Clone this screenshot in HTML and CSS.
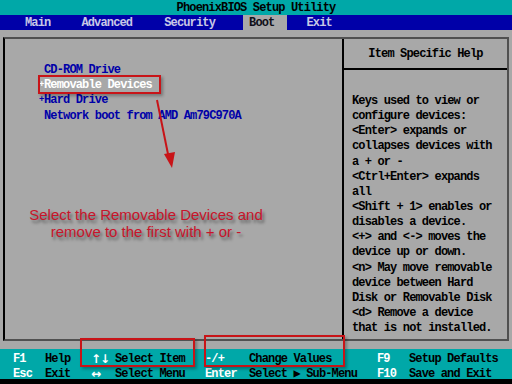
FILE: index.html
```html
<!DOCTYPE html>
<html>
<head>
<meta charset="utf-8">
<link rel="stylesheet" href="styles.css">
</head>
<body>
<div class="screen">
  <div class="title">PhoenixBIOS Setup Utility</div>
  <div class="menu">
    <span class="m m-main">Main</span>
    <span class="m m-adv">Advanced</span>
    <span class="m m-sec">Security</span>
    <span class="m m-boot">Boot</span>
    <span class="m m-exit">Exit</span>
  </div>
  <div class="main">
    <div class="frame">
      <div class="left">
        <div class="item">CD-ROM Drive</div>
        <div class="item sel"><span class="mark">+</span>Removable Devices</div>
        <div class="item"><span class="mark">+</span>Hard Drive</div>
        <div class="item">Network boot from AMD Am79C970A</div>
        <div class="note">
          <div>Select the Removable Devices and</div>
          <div>remove to the first with + or -</div>
        </div>
      </div>
      <div class="right">
        <div class="help-head">Item Specific Help</div>
        <div class="help">
          <div>Keys used to view or</div>
          <div>configure devices:</div>
          <div>&lt;Enter&gt; expands or</div>
          <div>collapses devices with</div>
          <div>a + or -</div>
          <div>&lt;Ctrl+Enter&gt; expands</div>
          <div>all</div>
          <div>&lt;Shift + 1&gt; enables or</div>
          <div>disables a device.</div>
          <div>&lt;+&gt; and &lt;-&gt; moves the</div>
          <div>device up or down.</div>
          <div>&lt;n&gt; May move removable</div>
          <div>device between Hard</div>
          <div>Disk or Removable Disk</div>
          <div>&lt;d&gt; Remove a device</div>
          <div>that is not installed.</div>
        </div>
      </div>
    </div>
  </div>
  <div class="footer">
    <span class="k">F1</span><span class="d">Help</span><span class="k arr">↑↓</span><span class="d">Select Item</span><span class="k">-/+</span><span class="d">Change Values</span><span class="k">F9</span><span class="d">Setup Defaults</span>
    <span class="k">Esc</span><span class="d">Exit</span><span class="k arr">↔</span><span class="d">Select Menu</span><span class="k">Enter</span><span class="d">Select ▶ Sub-Menu</span><span class="k">F10</span><span class="d">Save and Exit</span>
  </div>
  <div class="bottom"></div>

  <div class="hl hl-item"></div>
  <div class="hl hl-select"></div>
  <div class="hl hl-change"></div>
  <svg class="arrow" width="40" height="80" viewBox="0 0 40 80">
    <line x1="7" y1="3" x2="19" y2="62" stroke="#c81418" stroke-width="2"/>
    <polygon points="14,57 25,55 22,71" fill="#c81418"/>
  </svg>
</div>
</body>
</html>
```

FILE: styles.css
```css
html, body {
  margin: 0;
  padding: 0;
  background: #000;
}
.screen {
  position: relative;
  width: 512px;
  height: 384px;
  overflow: hidden;
  background: #a8a8a8;
  font-family: "Liberation Mono", "DejaVu Sans Mono", monospace;
  font-size: 12px;
  font-weight: bold;
  letter-spacing: -0.85px;
}
.title {
  height: 15px;
  line-height: 16px;
  background: #00a8a8;
  color: #000;
  text-align: center;
}
.menu {
  height: 15px;
  line-height: 16px;
  background: #0000a8;
  color: #c8c8e6;
  display: flex;
  padding-left: 25px;
}
.m { display: block; }
.m-adv { margin-left: 31px; }
.m-sec { margin-left: 32px; }
.m-boot {
  margin-left: 28px;
  background: #a8a8a8;
  color: #101018;
  padding: 0 13px 0 6px;
}
.m-exit { margin-left: 19px; }
.main {
  height: 319px;
  box-sizing: border-box;
  padding: 7px 3px 8px 3px;
}
.frame {
  height: 304px;
  box-sizing: border-box;
  border-top: 2px solid #505050;
  border-left: 2px solid #000;
  border-right: 2px solid #505050;
  border-bottom: 2px solid #505050;
  display: grid;
  grid-template-columns: 337px 1fr;
}
.left {
  padding-top: 24px;
  padding-left: 39px;
  color: #0000a8;
}
.item {
  height: 15.2px;
  line-height: 15.2px;
  white-space: nowrap;
}
.item.sel { color: #fff; }
.mark {
  display: inline-block;
  width: 5px;
  margin-left: -5px;
  font-size: 9px;
  letter-spacing: 0;
  vertical-align: top;
  line-height: 15.2px;
}
.note {
  margin-top: 82px;
  margin-left: -39px;
  width: 282px;
  text-align: center;
  font-family: "Liberation Sans", Arial, sans-serif;
  font-weight: normal;
  font-size: 15px;
  letter-spacing: 0;
  line-height: 17px;
  color: #c8142a;
  text-shadow: 2px 3px 3px rgba(0, 0, 0, 0.45);
}
.right {
  border-left: 2px solid #000;
  color: #000;
}
.help-head {
  height: 27px;
  padding-top: 2px;
  line-height: 27px;
  text-align: center;
  border-bottom: 2px solid #000;
}
.help {
  padding-top: 24px;
  padding-left: 8px;
}
.help div {
  height: 15.15px;
  line-height: 15.15px;
  white-space: nowrap;
}
.footer {
  height: 30px;
  box-sizing: border-box;
  padding: 3px 0 0 13px;
  background: #00a8a8;
  display: grid;
  grid-template-columns: 32px 46px 24px 90px 44px 128px 32px 1fr;
  grid-auto-rows: 15px;
  line-height: 15px;
  white-space: nowrap;
}
.k { color: #fff; }
.d { color: #000; }
.arr {
  font-family: "DejaVu Sans", sans-serif;
  font-size: 12px;
  letter-spacing: -1px;
}
.bottom {
  height: 5px;
  background: #000;
}
.hl {
  position: absolute;
  border: 2px solid #c81418;
  box-sizing: border-box;
  box-shadow: 2px 2px 3px rgba(0, 0, 0, 0.3);
}
.hl-item { left: 38px; top: 75px; width: 123px; height: 19px; }
.hl-select { left: 80px; top: 338px; width: 115px; height: 29px; }
.hl-change { left: 204px; top: 335px; width: 141px; height: 32px; }
.arrow {
  position: absolute;
  left: 150px;
  top: 97px;
}
```
